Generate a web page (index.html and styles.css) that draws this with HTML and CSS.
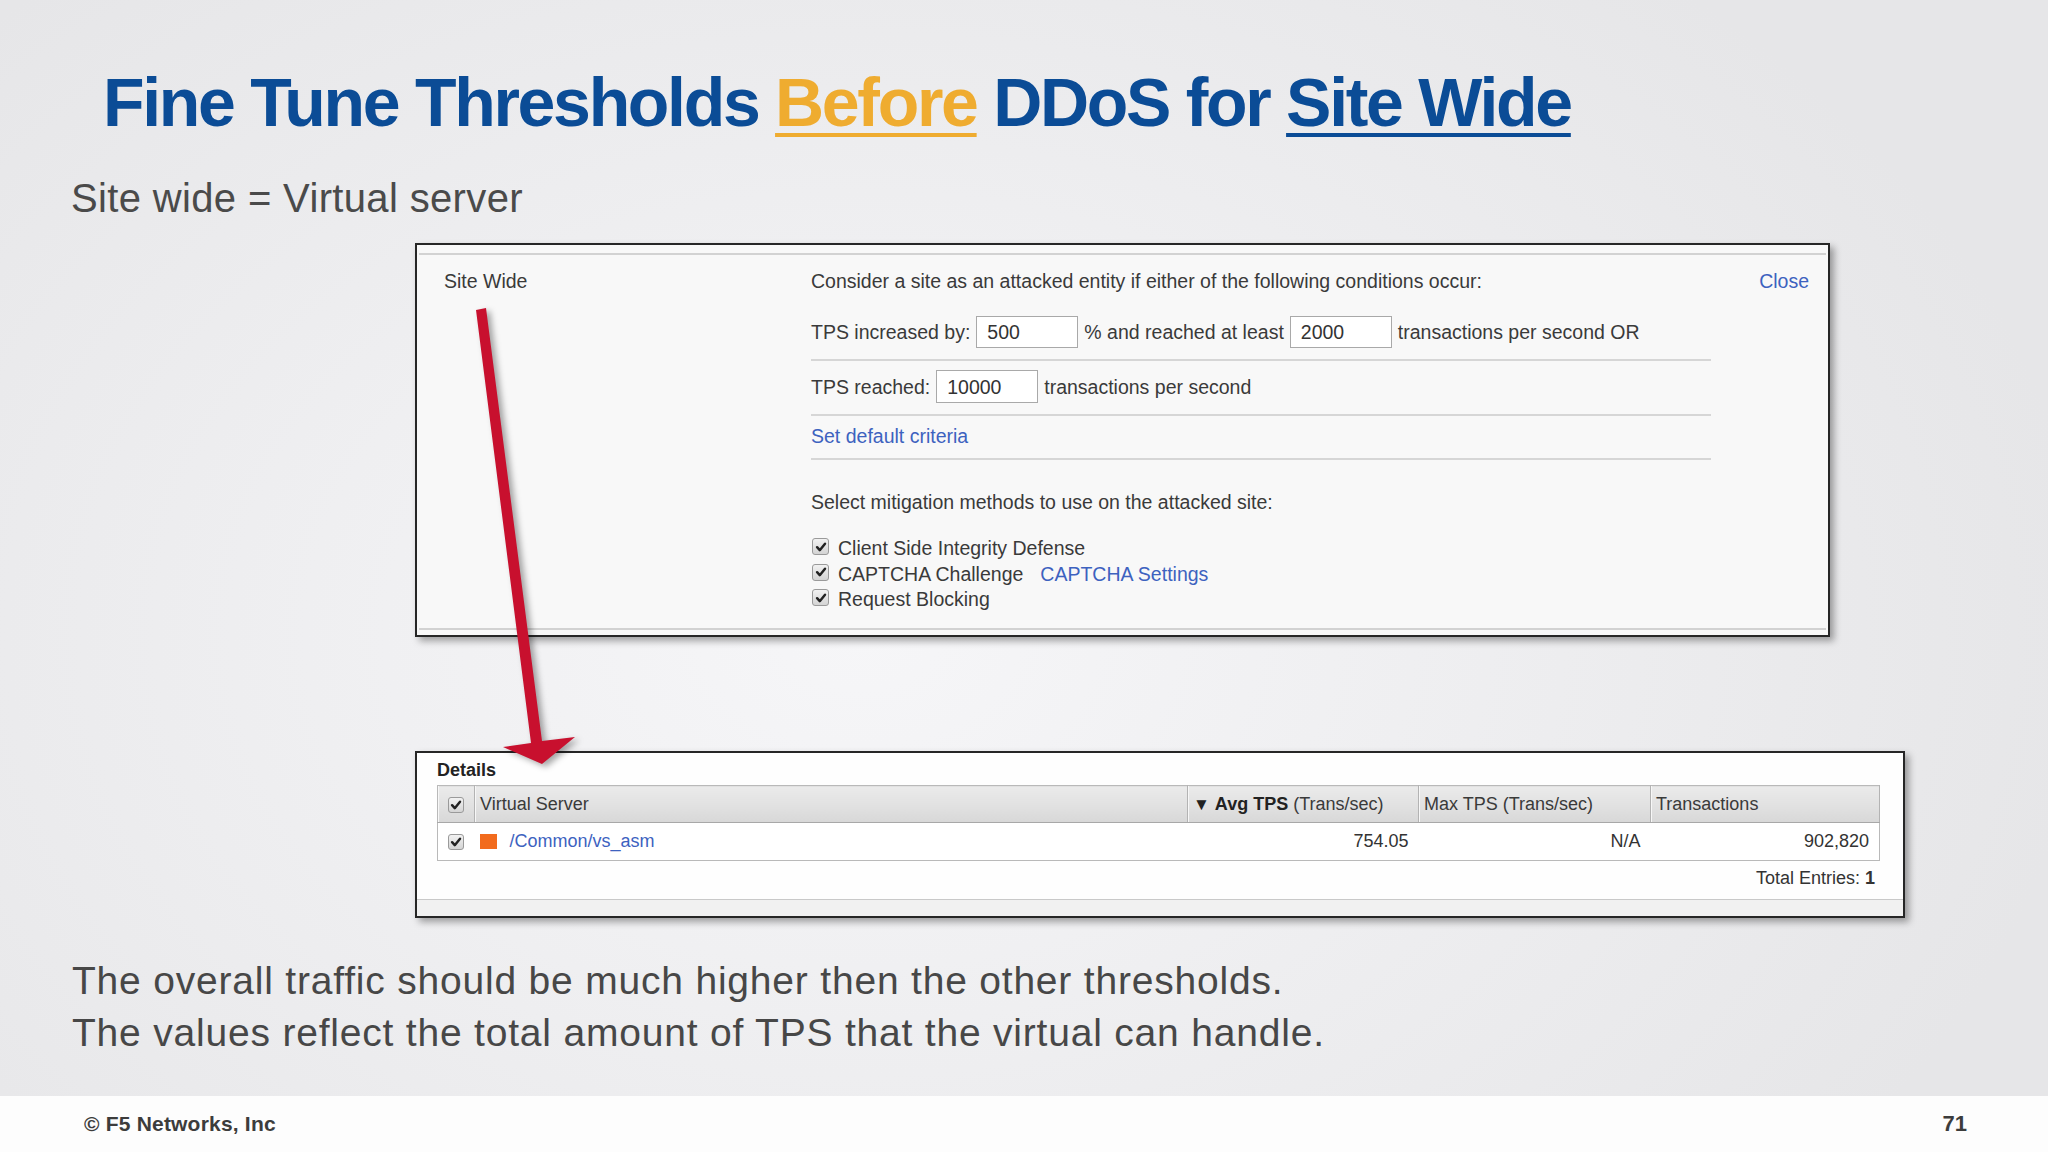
FILE: index.html
```html
<!DOCTYPE html>
<html lang="en">
<head>
<meta charset="utf-8">
<title>Fine Tune Thresholds Before DDoS for Site Wide</title>
<link rel="stylesheet" href="styles.css">
</head>
<body>
<div class="slide">
  <main class="content">
    <h1 class="title">Fine Tune Thresholds <u class="hl-orange">Before</u> DDoS for <u class="hl-blue">Site Wide</u></h1>
    <p class="subtitle">Site wide = Virtual server</p>

    <section class="panel panel-site">
      <div class="site-row">
        <div class="site-label">Site Wide</div>
        <div class="site-body">
          <p class="line">Consider a site as an attacked entity if either of the following conditions occur:</p>
          <div class="crit-row r1">
            <span>TPS increased by:</span><span class="inp">500</span><span>% and reached at least</span><span class="inp">2000</span><span>transactions per second OR</span>
          </div>
          <div class="crit-row r2">
            <span>TPS reached:</span><span class="inp">10000</span><span>transactions per second</span>
          </div>
          <div class="crit-row r3">
            <a class="link">Set default criteria</a>
          </div>
          <p class="line select">Select mitigation methods to use on the attacked site:</p>
          <ul class="methods">
            <li><span class="cb"><svg viewBox="0 0 16 16"><path d="M3.5 8.2 L6.6 11.6 L12.6 4.2"/></svg></span>Client Side Integrity Defense</li>
            <li><span class="cb"><svg viewBox="0 0 16 16"><path d="M3.5 8.2 L6.6 11.6 L12.6 4.2"/></svg></span>CAPTCHA Challenge <a class="link captcha">CAPTCHA Settings</a></li>
            <li><span class="cb"><svg viewBox="0 0 16 16"><path d="M3.5 8.2 L6.6 11.6 L12.6 4.2"/></svg></span>Request Blocking</li>
          </ul>
        </div>
        <a class="link close">Close</a>
      </div>
    </section>

    <section class="panel panel-details">
      <div class="details-title">Details</div>
      <table class="grid">
        <colgroup>
          <col class="c-chk"><col class="c-vs"><col class="c-avg"><col class="c-max"><col class="c-tr">
        </colgroup>
        <thead>
          <tr>
            <th class="chk"><span class="cb small"><svg viewBox="0 0 16 16"><path d="M3.5 8.2 L6.6 11.6 L12.6 4.2"/></svg></span></th>
            <th>Virtual Server</th>
            <th><span class="sort">▼</span> <b>Avg TPS</b> (Trans/sec)</th>
            <th>Max TPS (Trans/sec)</th>
            <th>Transactions</th>
          </tr>
        </thead>
        <tbody>
          <tr>
            <td class="chk"><span class="cb small"><svg viewBox="0 0 16 16"><path d="M3.5 8.2 L6.6 11.6 L12.6 4.2"/></svg></span></td>
            <td class="vs"><span class="swatch"></span><a class="link">/Common/vs_asm</a></td>
            <td class="num">754.05</td>
            <td class="num">N/A</td>
            <td class="num">902,820</td>
          </tr>
        </tbody>
      </table>
      <div class="total">Total Entries: <b>1</b></div>
      <div class="strip"></div>
    </section>

    <div class="notes">
      <p>The overall traffic should be much higher then the other thresholds.</p>
      <p>The values reflect the total amount of TPS that the virtual can handle.</p>
    </div>
  </main>

  <footer class="footer">
    <span class="copy">© F5 Networks, Inc</span>
    <span class="page">71</span>
  </footer>

  <svg class="arrow" viewBox="0 0 2048 1152" width="2048" height="1152">
    <polygon points="476,310 486,308 542,741 575,737 542,764 503,747 531,743"/>
  </svg>
</div>
</body>
</html>
```

FILE: styles.css
```css
html, body {
  margin: 0;
  padding: 0;
}

body {
  width: 2048px;
  height: 1152px;
  overflow: hidden;
  font-family: "Liberation Sans", Arial, sans-serif;
}

.slide {
  position: relative;
  width: 2048px;
  height: 1152px;
  display: flex;
  flex-direction: column;
  background: radial-gradient(ellipse 60% 75% at 42% 55%, #f6f6f8 0%, #efeff1 45%, #e6e6e8 100%);
}

.content {
  flex: 1;
  display: flex;
  flex-direction: column;
  align-items: flex-start;
}

.title {
  margin: 68px 0 0 103px;
  font-size: 68px;
  line-height: 68px;
  font-weight: 700;
  letter-spacing: -2.3px;
  color: #0b4c96;
  white-space: nowrap;
}

.title u {
  text-decoration-thickness: 4px;
  text-underline-offset: 7px;
}

.hl-orange {
  color: #efac30;
  text-decoration-color: #efac30;
}

.hl-blue {
  color: #0b4c96;
}

.subtitle {
  margin: 42px 0 0 71px;
  font-size: 40px;
  line-height: 40px;
  letter-spacing: 0.35px;
  color: #4a4a4a;
}

/* Panels (screenshots) */
.panel {
  box-sizing: border-box;
  margin-left: 415px;
  border: 2px solid #262626;
  box-shadow: 4px 4px 7px rgba(0, 0, 0, 0.35);
  color: #3a3a3a;
}

.panel-site {
  margin-top: 25px;
  width: 1415px;
  height: 394px;
  padding: 8px 2px 5px 2px;
  background: #f8f8f8;
  font-size: 19.5px;
}

.site-row {
  box-sizing: border-box;
  height: 100%;
  border-top: 2px solid #d2d2d2;
  border-bottom: 2px solid #d2d2d2;
  display: grid;
  grid-template-columns: 392px 900px 1fr;
  align-items: start;
}

.site-label {
  padding: 14px 0 0 25px;
  line-height: 24px;
}

.site-body {
  display: flex;
  flex-direction: column;
  padding-top: 14px;
}

.line {
  margin: 0;
  line-height: 24px;
}

.crit-row {
  display: flex;
  align-items: center;
  border-bottom: 2px solid #d6d6d6;
  line-height: 24px;
}

.r1 {
  margin-top: 23px;
  padding-bottom: 11px;
  gap: 6px;
}

.r2 {
  padding: 9px 0 11px;
  gap: 6px;
}

.r3 {
  padding: 8px 0 10px;
}

.inp {
  box-sizing: border-box;
  display: inline-flex;
  align-items: center;
  width: 102px;
  height: 32px;
  padding-left: 10px;
  background: #ffffff;
  border: 1px solid #a9a9a9;
  color: #333;
}

.r2 .inp {
  height: 33px;
}

.r1 .inp:first-of-type {
  margin-left: 2px;
}

.link {
  color: #3d62bf;
  text-decoration: none;
}

.select {
  margin-top: 30px;
}

.methods {
  list-style: none;
  margin: 22px 0 0;
  padding: 0;
}

.methods li {
  display: flex;
  align-items: center;
  height: 25.5px;
  line-height: 25.5px;
}

.methods .captcha {
  margin-left: 17px;
}

.cb {
  box-sizing: border-box;
  display: inline-flex;
  align-items: center;
  justify-content: center;
  width: 17px;
  height: 17px;
  margin: -4px 9px 0 1px;
  border: 1px solid #9a9a9a;
  border-radius: 3px;
  background: linear-gradient(#f2f2f2, #d4d4d4);
}

.cb svg {
  width: 14px;
  height: 14px;
  fill: none;
  stroke: #222;
  stroke-width: 2.8;
  stroke-linecap: round;
  stroke-linejoin: round;
}

.cb.small {
  margin: 0;
  width: 16px;
  height: 16px;
}

.close {
  justify-self: end;
  padding: 14px 17px 0 0;
  line-height: 24px;
}

/* Details panel */
.panel-details {
  margin-top: 114px;
  width: 1490px;
  height: 167px;
  background: #fefefe;
  display: flex;
  flex-direction: column;
  font-size: 18px;
}

.details-title {
  padding: 5px 0 0 20px;
  line-height: 24px;
  font-weight: 700;
  color: #222;
}

.grid {
  margin: 3px 0 0 20px;
  width: 1442px;
  border-collapse: collapse;
  table-layout: fixed;
  border: 1px solid #b9b9b9;
  font-size: 18px;
}

.c-chk { width: 37px; }
.c-vs { width: 713px; }
.c-avg { width: 231px; }
.c-max { width: 232px; }
.c-tr { width: 229px; }

.grid th {
  box-sizing: border-box;
  height: 37px;
  padding: 0 0 0 5px;
  text-align: left;
  font-weight: 400;
  color: #3a3a3a;
  background: linear-gradient(#ebebeb, #d8d8d8);
  border-right: 1px solid #b3b3b3;
  border-bottom: 1px solid #a8a8a8;
  box-shadow: inset 1px 0 0 #f7f7f7;
  white-space: nowrap;
}

.grid th b {
  color: #222;
}

.grid th .sort {
  font-size: 17px;
  color: #222;
}

.grid th.chk,
.grid td.chk {
  padding: 0;
  text-align: center;
}

.grid th.chk .cb,
.grid td.chk .cb {
  vertical-align: middle;
}

.grid td {
  height: 37px;
  padding: 0 10px 0 5px;
  background: #ffffff;
  color: #333;
  white-space: nowrap;
}

.grid td.vs {
  display: flex;
  align-items: center;
  gap: 13px;
}

.swatch {
  display: inline-block;
  width: 17px;
  height: 15px;
  background: #f26b1d;
}

.grid td.num {
  text-align: right;
}

.total {
  margin-top: 5px;
  width: 1458px;
  text-align: right;
  line-height: 24px;
  color: #333;
}

.strip {
  margin-top: auto;
  height: 16px;
  border-top: 1px solid #c9c9c9;
  background: #f1f1f1;
}

/* Notes */
.notes {
  margin: 37px 0 0 72px;
  color: #474747;
  font-size: 39px;
  line-height: 52px;
  letter-spacing: 0.8px;
}

.notes p {
  margin: 0;
  white-space: nowrap;
}

/* Footer */
.footer {
  height: 56px;
  flex: none;
  display: flex;
  align-items: center;
  justify-content: space-between;
  padding: 0 81px 0 84px;
  background: #fdfdfd;
  color: #3c3c3c;
  font-weight: 700;
}

.copy {
  font-size: 21px;
  letter-spacing: 0.2px;
}

.page {
  font-size: 22px;
}

/* Red arrow overlay */
.arrow {
  position: absolute;
  left: 0;
  top: 0;
  pointer-events: none;
  filter: drop-shadow(4px 3px 3px rgba(0, 0, 0, 0.35));
}

.arrow polygon {
  fill: #c8102e;
}
```
